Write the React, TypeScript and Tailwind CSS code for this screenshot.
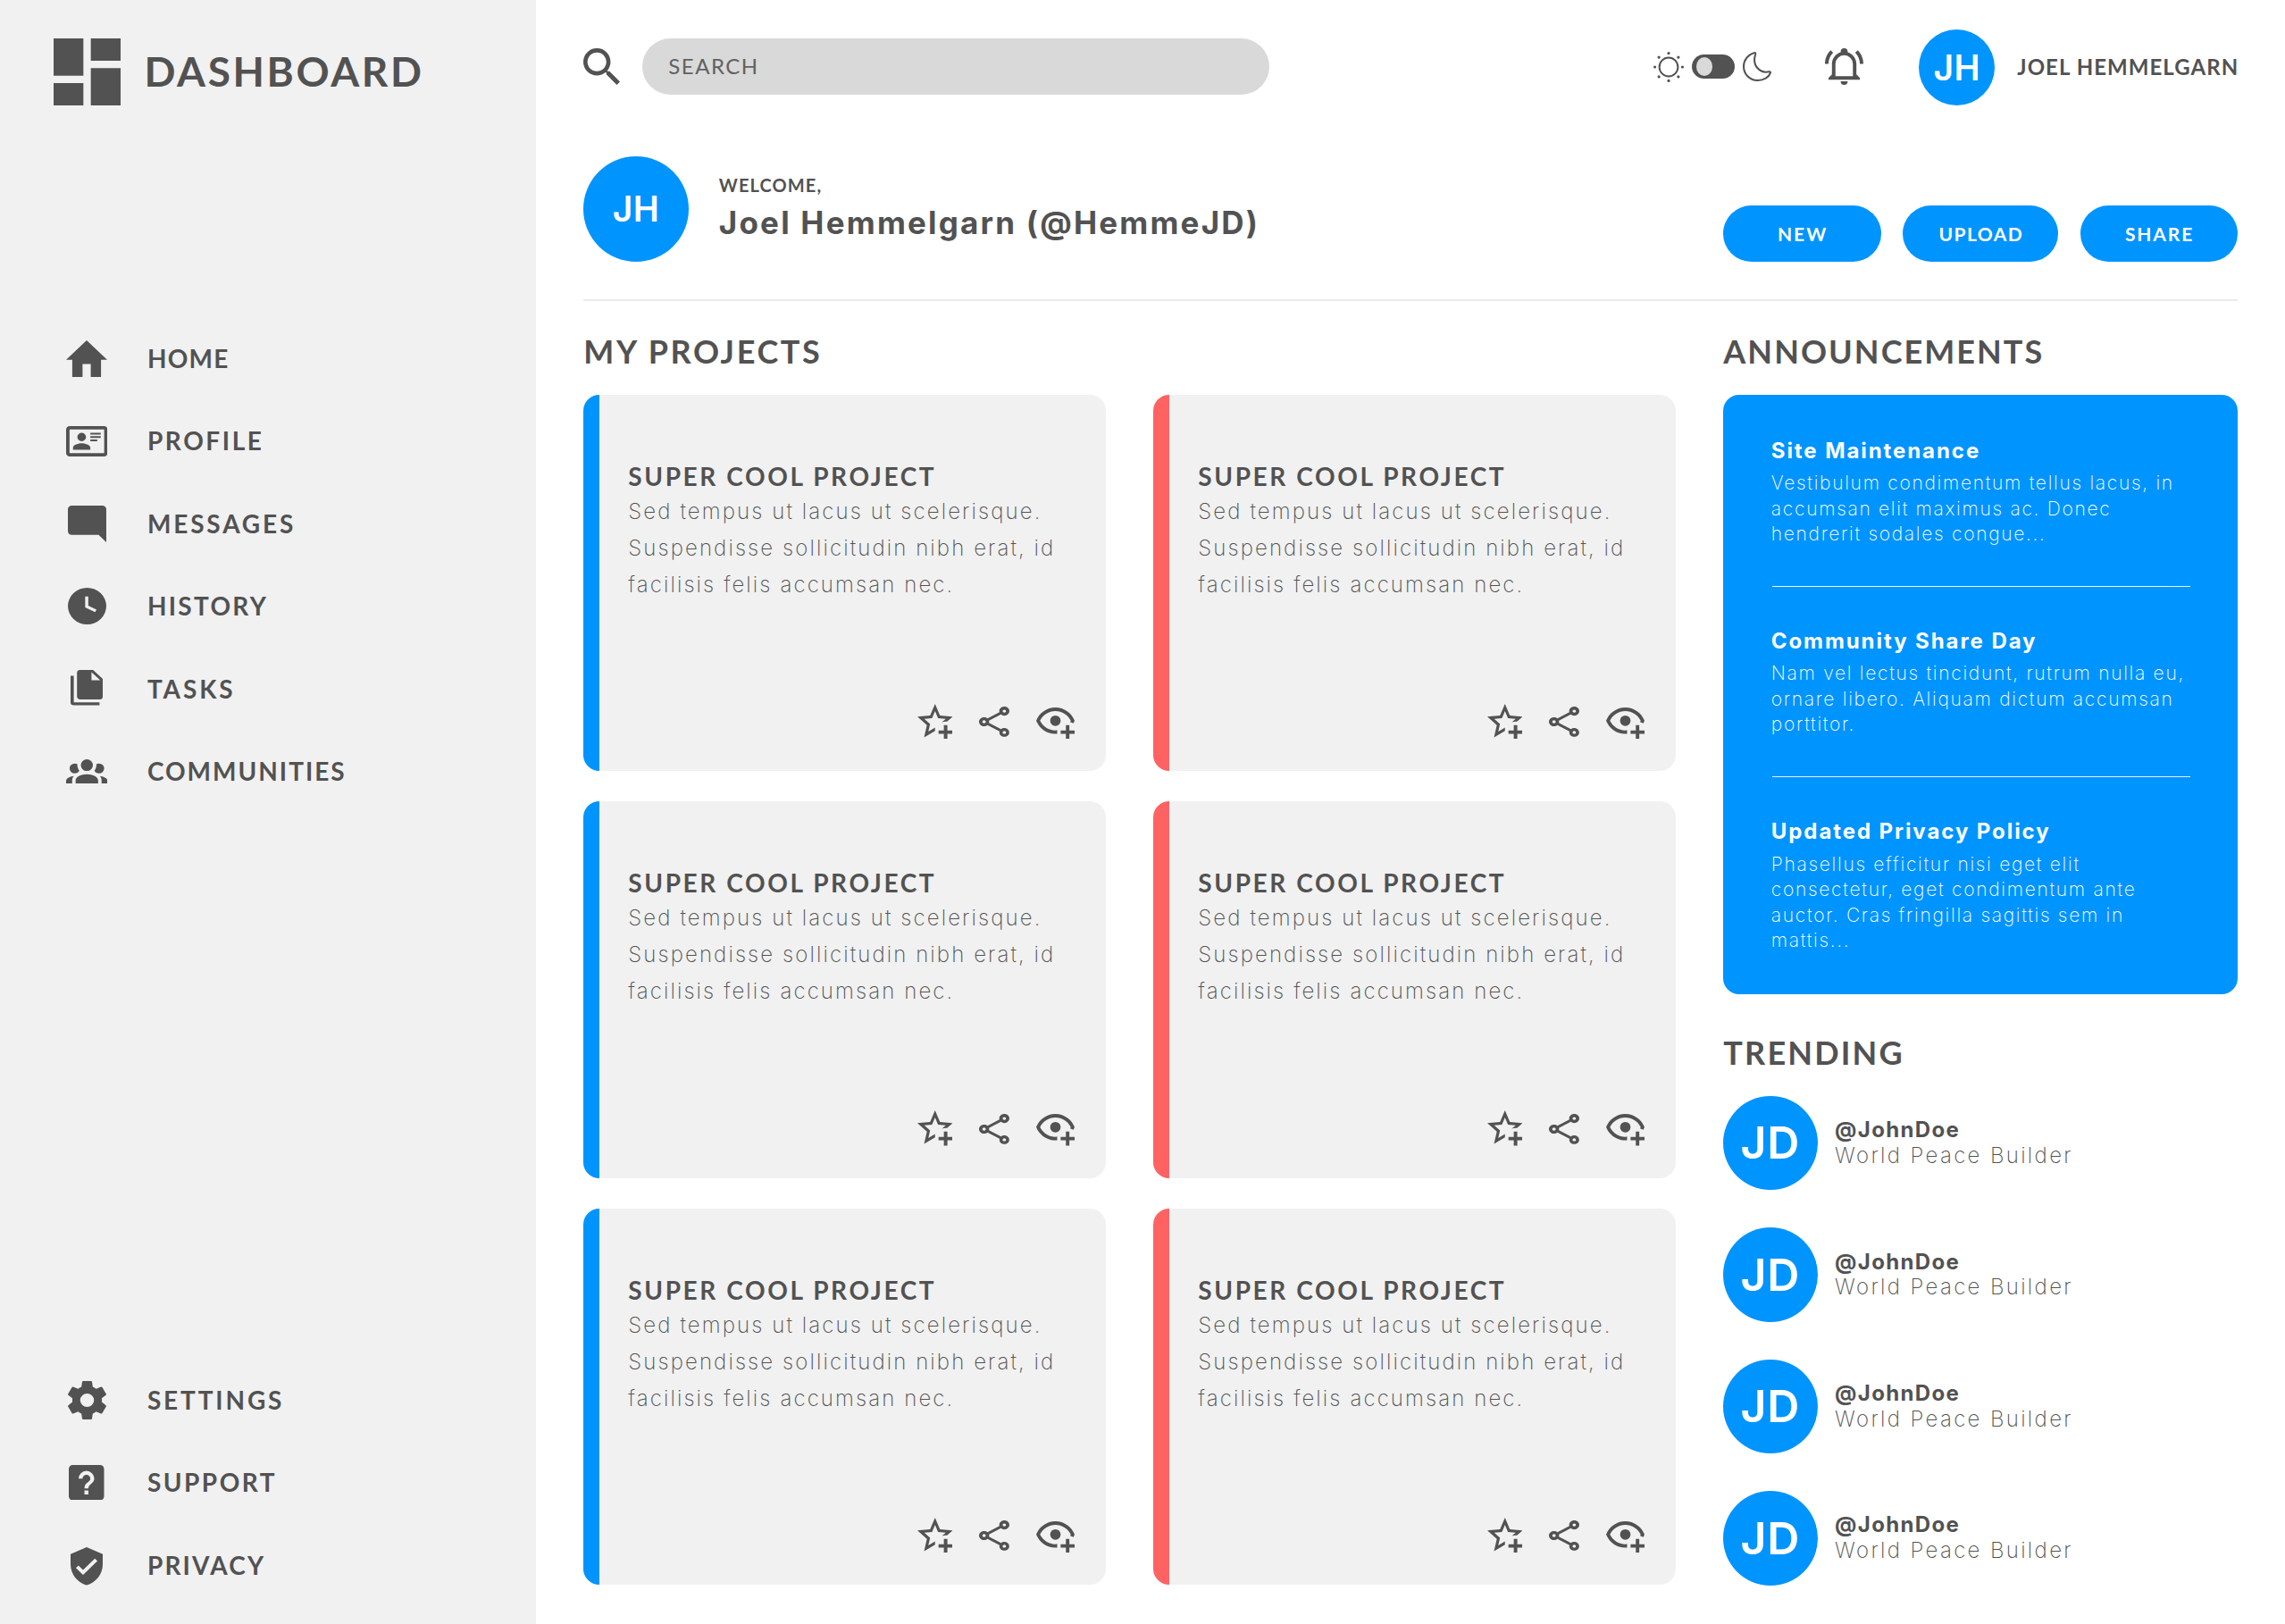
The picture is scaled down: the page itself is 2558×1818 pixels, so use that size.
import type { ReactNode } from "react";

type IconProps = { box: string; className: string; d: string };

function Icon({ box, className, d }: IconProps) {
  return (
    <svg viewBox={box} preserveAspectRatio="none" fill="currentColor" fillRule="evenodd" className={`block shrink-0 ${className}`}>
      <path d={d} />
    </svg>
  );
}

const icons = {
  dashboard: "M3 13h8V3H3v10zm0 8h8v-6H3v6zm10 0h8V11h-8v10zm0-18v6h8V3h-8z",
  home: "M10,20V14H14V20H19V12H22L12,3L2,12H5V20H10Z",
  profile:
    "M22,3H2C0.91,3.04 0.04,3.91 0,5V19C0.04,20.09 0.91,20.96 2,21H22C23.09,20.96 23.96,20.09 24,19V5C23.96,3.91 23.09,3.04 22,3M22,19H2V5H22V19M14,17V15.75C14,14.09 10.66,13.25 9,13.25C7.34,13.25 4,14.09 4,15.75V17H14M9,7A2.5,2.5 0 0,0 6.5,9.5A2.5,2.5 0 0,0 9,12A2.5,2.5 0 0,0 11.5,9.5A2.5,2.5 0 0,0 9,7M14,7V8H20V7H14M14,9V10H20V9H14M14,11V12H18V11H14",
  messages: "M21.99 4c0-1.1-.89-2-1.99-2H4c-1.1 0-2 .9-2 2v12c0 1.1.9 2 2 2h14l4 4-.01-18z",
  history: "M12 2A10 10 0 0 0 2 12A10 10 0 0 0 12 22A10 10 0 0 0 22 12A10 10 0 0 0 12 2zM11 6.8h1.6v5l4.3 2.1-.7 1.4L11 12.7z",
  tasks:
    "M15,7H20.5L15,1.5V7M8,0H16L22,6V18A2,2 0 0,1 20,20H8C6.89,20 6,19.1 6,18V2A2,2 0 0,1 8,0M4,4V22H20V24H4A2,2 0 0,1 2,22V4H4Z",
  communities:
    "M12,5.5A3.5,3.5 0 0,1 15.5,9A3.5,3.5 0 0,1 12,12.5A3.5,3.5 0 0,1 8.5,9A3.5,3.5 0 0,1 12,5.5M5,8C5.56,8 6.08,8.15 6.53,8.42C6.38,9.85 6.8,11.27 7.66,12.38C7.16,13.34 6.16,14 5,14A3,3 0 0,1 2,11A3,3 0 0,1 5,8M19,8A3,3 0 0,1 22,11A3,3 0 0,1 19,14C17.84,14 16.84,13.34 16.34,12.38C17.2,11.27 17.62,9.85 17.47,8.42C17.92,8.15 18.44,8 19,8M5.5,18.25C5.5,16.18 8.41,14.5 12,14.5C15.59,14.5 18.5,16.18 18.5,18.25V20H5.5V18.25M0,20V18.5C0,17.11 1.89,15.94 4.45,15.6C3.86,16.28 3.5,17.22 3.5,18.25V20H0M24,20H20.5V18.25C20.5,17.22 20.14,16.28 19.55,15.6C22.11,15.94 24,17.11 24,18.5V20Z",
  settings:
    "M12,15.5A3.5,3.5 0 0,1 8.5,12A3.5,3.5 0 0,1 12,8.5A3.5,3.5 0 0,1 15.5,12A3.5,3.5 0 0,1 12,15.5M19.43,12.97C19.47,12.65 19.5,12.33 19.5,12C19.5,11.67 19.47,11.34 19.43,11L21.54,9.37C21.73,9.22 21.78,8.95 21.66,8.73L19.66,5.27C19.54,5.05 19.27,4.96 19.05,5.05L16.56,6.05C16.04,5.66 15.5,5.32 14.87,5.07L14.5,2.42C14.46,2.18 14.25,2 14,2H10C9.75,2 9.54,2.18 9.5,2.42L9.13,5.07C8.5,5.32 7.96,5.66 7.44,6.05L4.95,5.05C4.73,4.96 4.46,5.05 4.34,5.27L2.34,8.73C2.21,8.95 2.27,9.22 2.46,9.37L4.57,11C4.53,11.34 4.5,11.67 4.5,12C4.5,12.33 4.53,12.65 4.57,12.97L2.46,14.63C2.27,14.78 2.21,15.05 2.34,15.27L4.34,18.73C4.46,18.95 4.73,19.03 4.95,18.95L7.44,17.94C7.96,18.34 8.5,18.68 9.13,18.93L9.5,21.58C9.54,21.82 9.75,22 10,22H14C14.25,22 14.46,21.82 14.5,21.58L14.87,18.93C15.5,18.67 16.04,18.34 16.56,17.94L19.05,18.95C19.27,19.03 19.54,18.95 19.66,18.73L21.66,15.27C21.78,15.05 21.73,14.78 21.54,14.63L19.43,12.97Z",
  support:
    "M11,18H13V16H11V18M12,6A4,4 0 0,0 8,10H10A2,2 0 0,1 12,8A2,2 0 0,1 14,10C14,12 11,11.75 11,15H13C13,12.75 16,12.5 16,10A4,4 0 0,0 12,6M5,3H19A2,2 0 0,1 21,5V19A2,2 0 0,1 19,21H5A2,2 0 0,1 3,19V5A2,2 0 0,1 5,3Z",
  privacy:
    "M10,17L6,13L7.41,11.59L10,14.17L16.59,7.58L18,9M12,1L3,5V11C3,16.55 6.84,21.74 12,23C17.16,21.74 21,16.55 21,11V5L12,1Z",
  search:
    "M9.5,3A6.5,6.5 0 0,1 16,9.5C16,11.11 15.41,12.59 14.44,13.73L14.71,14H15.5L20.5,19L19,20.5L14,15.5V14.71L13.73,14.44C12.59,15.41 11.11,16 9.5,16A6.5,6.5 0 0,1 3,9.5A6.5,6.5 0 0,1 9.5,3M9.5,5C7,5 5,7 5,9.5C5,12 7,14 9.5,14C12,14 14,12 14,9.5C14,7 12,5 9.5,5Z",
  bell: "M10,21H14A2,2 0 0,1 12,23A2,2 0 0,1 10,21M21,19V20H3V19L5,17V11C5,7.9 7.03,5.17 10,4.29C10,4.19 10,4.1 10,4A2,2 0 0,1 12,2A2,2 0 0,1 14,4C14,4.1 14,4.19 14,4.29C16.97,5.17 19,7.9 19,11V17L21,19M17,11A5,5 0 0,0 12,6A5,5 0 0,0 7,11V18H17V11M19.75,3.19L18.33,4.61C20.04,6.3 21,8.6 21,11H23C23,8.07 21.84,5.25 19.75,3.19M1,11H3C3,8.6 3.96,6.3 5.67,4.61L4.25,3.19C2.16,5.25 1,8.07 1,11Z",
  star: "M5.8 21L7.4 14L2 9.2L9.2 8.6L12 2L14.8 8.6L22 9.2L18.8 12H18C17.3 12 16.6 12.1 15.9 12.4L18.1 10.5L13.7 10.1L12 6.1L10.3 10.1L5.9 10.5L9.2 13.4L8.2 17.7L12 15.4V17.3L5.8 21M17 14V17H14V19H17V22H19V19H22V17H19V14H17Z",
  share:
    "M18 16.08C17.24 16.08 16.56 16.38 16.04 16.85L8.91 12.7C8.96 12.47 9 12.24 9 12S8.96 11.53 8.91 11.3L15.96 7.19C16.5 7.69 17.21 8 18 8C19.66 8 21 6.66 21 5S19.66 2 18 2 15 3.34 15 5C15 5.24 15.04 5.47 15.09 5.7L8.04 9.81C7.5 9.31 6.79 9 6 9C4.34 9 3 10.34 3 12S4.34 15 6 15C6.79 15 7.5 14.69 8.04 14.19L15.16 18.34C15.11 18.55 15.08 18.77 15.08 19C15.08 20.61 16.39 21.91 18 21.91S20.92 20.61 20.92 19C20.92 17.39 19.61 16.08 18 16.08M18 4C18.55 4 19 4.45 19 5S18.55 6 18 6 17 5.55 17 5 17.45 4 18 4M6 13C5.45 13 5 12.55 5 12S5.45 11 6 11 7 11.45 7 12 6.55 13 6 13M18 20C17.45 20 17 19.55 17 19S17.45 18 18 18 19 18.45 19 19 18.55 20 18 20Z",
  eye: "M12,4.5C7,4.5 2.73,7.61 1,12C2.73,16.39 7,19.5 12,19.5C12.36,19.5 12.72,19.5 13.08,19.45C13.03,19.13 13,18.82 13,18.5C13,18.14 13.04,17.78 13.1,17.42C12.74,17.46 12.37,17.5 12,17.5C8.24,17.5 4.83,15.36 3.18,12C4.83,8.64 8.24,6.5 12,6.5C15.76,6.5 19.17,8.64 20.82,12C20.7,12.24 20.56,12.45 20.43,12.68C21.09,12.84 21.72,13.11 22.29,13.5C22.56,13 22.8,12.5 23,12C21.27,7.61 17,4.5 12,4.5M12,9A3,3 0 0,0 9,12A3,3 0 0,0 12,15A3,3 0 0,0 15,12A3,3 0 0,0 12,9M18,14.5V17.5H15V19.5H18V22.5H20V19.5H23V17.5H20V14.5H18Z",
};

type NavEntry = { label: string; tracking: string; box: string; size: string; d: string };

const mainNav: NavEntry[] = [
  { label: "HOME", tracking: "tracking-[1.2px]", box: "2 3 20 17", size: "w-[46px] h-[41px]", d: icons.home },
  { label: "PROFILE", tracking: "tracking-[2.6px]", box: "0 3 24 18", size: "w-[46.5px] h-[34px]", d: icons.profile },
  { label: "MESSAGES", tracking: "tracking-[2.85px]", box: "2 2 20 20", size: "w-[43px] h-[41px]", d: icons.messages },
  { label: "HISTORY", tracking: "tracking-[2.3px]", box: "2 2 20 20", size: "w-[43px] h-[41px]", d: icons.history },
  { label: "TASKS", tracking: "tracking-[2.9px]", box: "2 0 20 24", size: "w-[36px] h-[39.5px] mb-[2px]", d: icons.tasks },
  { label: "COMMUNITIES", tracking: "tracking-[2px]", box: "0 5.5 24 14.5", size: "w-[46.5px] h-[27px]", d: icons.communities },
];

const bottomNav: NavEntry[] = [
  { label: "SETTINGS", tracking: "tracking-[2.85px]", box: "2.27 2 19.46 20", size: "w-[43px] h-[43px]", d: icons.settings },
  { label: "SUPPORT", tracking: "tracking-[2.5px]", box: "3 3 18 18", size: "w-[39.5px] h-[39.5px] mb-[1px]", d: icons.support },
  { label: "PRIVACY", tracking: "tracking-[2.2px]", box: "3 1 18 22", size: "w-[36px] h-[42.5px] mt-[2px]", d: icons.privacy },
];

function NavList({ items }: { items: NavEntry[] }) {
  return (
    <ul>
      {items.map((item) => (
        <li key={item.label} className="flex h-[92.4px] items-center">
          <span className="flex w-[47px] justify-center">
            <Icon box={item.box} d={item.d} className={item.size} />
          </span>
          <span className={`mb-px ml-[44.2px] text-[28px] font-bold ${item.tracking}`}>{item.label}</span>
        </li>
      ))}
    </ul>
  );
}

function Sidebar() {
  return (
    <aside className="flex w-[600px] shrink-0 flex-col bg-[#f1f1f1] pt-[43px] pb-[19.5px]">
      <div className="flex h-[75px] items-center pl-[60px]">
        <Icon box="3 3 18 18" d={icons.dashboard} className="h-[75px] w-[75px]" />
        <span className="mb-[2px] ml-[26.5px] text-[46px] leading-[56px] font-bold tracking-[2.62px]">DASHBOARD</span>
      </div>
      <nav className="mt-[237.4px] flex flex-1 flex-col justify-between pl-[73.7px]">
        <NavList items={mainNav} />
        <NavList items={bottomNav} />
      </nav>
    </aside>
  );
}

const rays = [0, 45, 90, 135, 180, 225, 270, 315];

function Sun() {
  return (
    <svg viewBox="-17 -17 34 34" className="block h-[34px] w-[34px] shrink-0" fill="currentColor">
      <circle r="10.4" fill="none" stroke="currentColor" strokeWidth="2" />
      {rays.map((a) => (
        <circle key={a} cx="15.4" r="1.6" transform={`rotate(${a})`} />
      ))}
    </svg>
  );
}

function Moon() {
  return (
    <svg viewBox="0 0 32 33" className="block h-[33px] w-[32px] shrink-0" fill="none" stroke="currentColor" strokeWidth="2" strokeLinejoin="round">
      <path d="M12.8 1.1C5.8 3.2 1 9.4 1 16.4C1 25 8 32 16.7 32C23.4 32 29.2 28.6 30.9 23.6C31.3 22.5 30.5 22 29.4 22.2C19.8 24.5 9.8 16 14.2 2.6C14.5 1.4 13.9 .8 12.8 1.1Z" />
    </svg>
  );
}

function TopBar() {
  return (
    <header className="flex h-[85px] items-center">
      <Icon box="3 3 17.5 17.5" d={icons.search} className="mb-[2px] h-[41px] w-[41px]" />
      <div className="mb-[2px] ml-[25px] flex h-[63px] w-[702px] items-center rounded-full bg-[#d9d9d9] pb-px pl-[29px] text-[24px] tracking-[1.49px] text-[#616161]">
        SEARCH
      </div>
      <div className="mb-[2px] ml-auto flex items-center">
        <Sun />
        <div className="ml-[9px] flex h-[27px] w-[48px] items-center rounded-full bg-[#525252] pl-[5px]">
          <span className="h-[20.5px] w-[18px] rounded-[50%] bg-[#d9d9d9]" />
        </div>
        <span className="ml-[9px]">
          <Moon />
        </span>
        <Icon box="1 2 22 21" d={icons.bell} className="ml-[60px] h-[41px] w-[43px]" />
      </div>
      <Avatar className="ml-[62px] h-[85px] w-[85px] text-[39px] tracking-[0.5px]">JH</Avatar>
      <span className="mb-[2px] ml-[25px] w-[247px] text-[24px] font-bold tracking-[1.05px] whitespace-nowrap">JOEL HEMMELGARN</span>
    </header>
  );
}

function Avatar({ className, children }: { className: string; children: ReactNode }) {
  return (
    <span
      className={`flex shrink-0 items-center justify-center rounded-full bg-[#0094ff] font-['Inter',sans-serif] leading-none font-semibold text-white ${className}`}
    >
      {children}
    </span>
  );
}

function Welcome() {
  return (
    <section className="mt-[57px] flex h-[117.7px] items-end">
      <Avatar className="h-[117.5px] w-[117.5px] text-[39px] tracking-[0.5px]">JH</Avatar>
      <div className="ml-[34px] flex flex-col gap-[8px] self-start pt-[19.6px]">
        <p className="text-[20px] leading-[24px] font-bold tracking-[1.1px]">WELCOME,</p>
        <h1 className="font-['Inter',sans-serif] text-[35px] leading-[44px] font-bold tracking-[2.2px]">Joel Hemmelgarn (@HemmeJD)</h1>
      </div>
      <div className="ml-auto flex gap-[24.5px] text-[21px] font-bold text-white">
        <button className="h-[62.7px] w-[176.5px] rounded-full bg-[#0094ff] pl-px tracking-[2px]">NEW</button>
        <button className="h-[62.7px] w-[174px] rounded-full bg-[#0094ff] pl-px tracking-[1.42px]">UPLOAD</button>
        <button className="h-[62.7px] w-[176.5px] rounded-full bg-[#0094ff] pl-px tracking-[1.9px]">SHARE</button>
      </div>
    </section>
  );
}

const stripes = ["bg-[#0094ff]", "bg-[#ff6262]", "bg-[#0094ff]", "bg-[#ff6262]", "bg-[#0094ff]", "bg-[#ff6262]"];

function ProjectCard({ stripe }: { stripe: string }) {
  return (
    <article className="flex h-[421.5px] overflow-hidden rounded-[18px] bg-[#f1f1f1]">
      <div className={`w-[18px] shrink-0 ${stripe}`} />
      <div className="flex flex-1 flex-col pt-[74px] pr-[35px] pb-[36px] pl-[32px]">
        <h3 className="text-[28px] leading-[34px] font-bold tracking-[2.6px]">SUPER COOL PROJECT</h3>
        <p className="mt-[2px] font-['Inter',sans-serif] text-[24px] leading-[41px] font-extralight tracking-[2.1px] whitespace-nowrap">
          Sed tempus ut lacus ut scelerisque.
          <br />
          Suspendisse sollicitudin nibh erat, id
          <br />
          facilisis felis accumsan nec.
        </p>
        <div className="mt-auto flex items-end justify-end gap-[30px]">
          <Icon box="2 2 20 20" d={icons.star} className="h-[39.5px] w-[39.5px]" />
          <Icon box="3 2 18 20" d={icons.share} className="mb-[2px] h-[34px] w-[34px]" />
          <Icon box="1 4.5 22 18" d={icons.eye} className="h-[35.5px] w-[43px]" />
        </div>
      </div>
    </article>
  );
}

const announcements = [
  { title: "Site Maintenance", lines: ["Vestibulum condimentum tellus lacus, in", "accumsan elit maximus ac. Donec", "hendrerit sodales congue..."] },
  { title: "Community Share Day", lines: ["Nam vel lectus tincidunt, rutrum nulla eu,", "ornare libero. Aliquam dictum accumsan", "porttitor."] },
  { title: "Updated Privacy Policy", lines: ["Phasellus efficitur nisi eget elit", "consectetur, eget condimentum ante", "auctor. Cras fringilla sagittis sem in", "mattis..."] },
];

function Announcements() {
  return (
    <div className="mt-[27px] h-[671.5px] rounded-[18px] bg-[#0094ff] px-[53.5px] pt-[48px] font-['Inter',sans-serif] text-white">
      {announcements.map((a, i) => (
        <section key={a.title}>
          {i > 0 && <div className="mt-[43.2px] mb-[46px] ml-[1.5px] h-px w-[468px] bg-white/90" />}
          <h3 className="text-[24px] leading-[30px] font-bold tracking-[1.92px]">{a.title}</h3>
          <div className="mt-[7.4px] text-[21px] leading-[28.5px] font-extralight tracking-[1.7px] whitespace-nowrap">
            {a.lines.map((line) => (
              <p key={line}>{line}</p>
            ))}
          </div>
        </section>
      ))}
    </div>
  );
}

function Trending() {
  return (
    <ul className="mt-[26.8px] flex flex-col gap-[42.2px]">
      {[1, 2, 3, 4].map((n) => (
        <li key={n} className="flex h-[105.3px] items-center">
          <Avatar className="h-[105.3px] w-[105.3px] pb-px text-[50px] tracking-[1px]">JD</Avatar>
          <div className="ml-[19.5px] font-['Inter',sans-serif] text-[24px] leading-[28.6px]">
            <p className="font-bold tracking-[1.35px]">@JohnDoe</p>
            <p className="font-extralight tracking-[2.35px]">World Peace Builder</p>
          </div>
        </li>
      ))}
    </ul>
  );
}

export default function App() {
  return (
    <div className="flex h-[1818px] w-[2558px] overflow-hidden bg-white font-['Lato',sans-serif] text-[#525252]">
      <Sidebar />
      <main className="flex-1 pt-[33px] pr-[52.7px] pl-[53.3px]">
        <TopBar />
        <Welcome />
        <div className="mt-[42.3px] h-[2px] bg-[#ebebeb]" />
        <div className="mt-[34px] flex gap-[53px]">
          <section className="w-[1223px]">
            <h2 className="text-[36px] leading-[44px] font-bold tracking-[2.6px]">MY PROJECTS</h2>
            <div className="mt-[27px] grid grid-cols-2 gap-x-[53px] gap-y-[33.9px]">
              {stripes.map((stripe, i) => (
                <ProjectCard key={i} stripe={stripe} />
              ))}
            </div>
          </section>
          <section className="w-[576px]">
            <h2 className="text-[36px] leading-[44px] font-bold tracking-[2.05px]">ANNOUNCEMENTS</h2>
            <Announcements />
            <h2 className="mt-[42.7px] text-[36px] leading-[44px] font-bold tracking-[2.17px]">TRENDING</h2>
            <Trending />
          </section>
        </div>
      </main>
    </div>
  );
}
